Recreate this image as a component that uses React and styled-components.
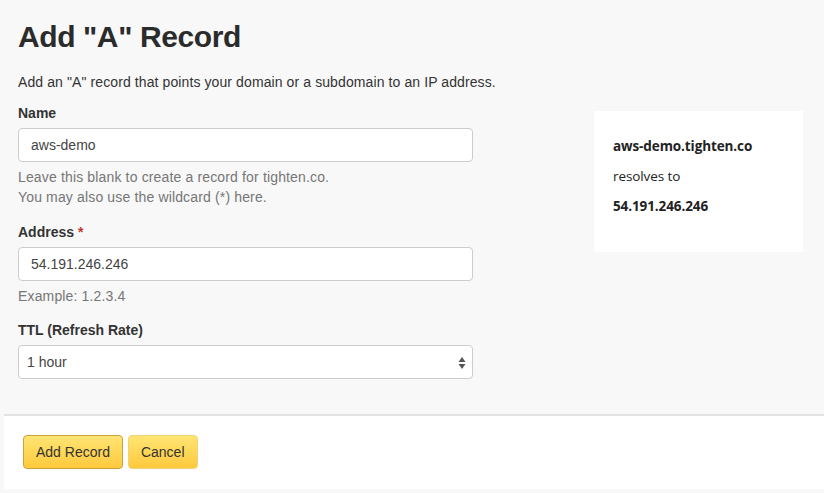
import React from "react";
import styled, { createGlobalStyle } from "styled-components";

const GlobalStyle = createGlobalStyle`
  html, body {
    margin: 0;
    padding: 0;
    background: #f8f8f8;
    font-family: "Liberation Sans", Arial, sans-serif;
    color: #333;
  }
  * { box-sizing: border-box; }
`;

const Page = styled.div`
  width: 824px;
  height: 493px;
  overflow: hidden;
  background: #f8f8f8;
`;

const Body = styled.div`
  display: flex;
  padding: 0 18px 0 18px;
  height: 414px;
`;

const FormColumn = styled.div`
  width: 455px;
`;

const Title = styled.h1`
  margin: 0;
  padding-top: 20px;
  font-size: 30px;
  line-height: 34px;
  font-weight: bold;
  color: #2b2b2b;
  letter-spacing: -0.4px;
`;

const Intro = styled.p`
  margin: 18px 0 0;
  font-size: 14px;
  line-height: 20px;
  white-space: nowrap;
  letter-spacing: 0.1px;
`;

const Group = styled.div`
  margin-top: ${(p) => p.$top || 15}px;
`;

const Label = styled.label`
  display: block;
  font-size: 14px;
  font-weight: bold;
  line-height: 20px;
  margin-bottom: 5px;
  color: #333;
`;

const Required = styled.span`
  color: #c0392b;
`;

const Input = styled.input`
  display: block;
  width: 100%;
  height: 34px;
  padding: 0 12px;
  font-family: "Liberation Sans", Arial, sans-serif;
  font-size: 14px;
  color: #444;
  background: #fff;
  border: 1px solid #ccc;
  border-radius: 4px;
  outline: none;
`;

const SelectBox = styled.div`
  position: relative;
  height: 34px;
  background: #fff;
  border: 1px solid #ccc;
  border-radius: 4px;
  display: flex;
  align-items: center;
  padding: 0 8px;
  font-size: 14px;
  color: #444;
`;

const Arrows = styled.svg`
  position: absolute;
  right: 6px;
  top: 11px;
`;

const Help = styled.div`
  margin-top: 5px;
  font-size: 14px;
  line-height: 20px;
  color: #767676;
  letter-spacing: 0.15px;
`;

const Preview = styled.aside`
  margin-left: 121px;
  margin-top: 111px;
  width: 209px;
  height: 141px;
  background: #fff;
  padding: 20px 19px;
  font-family: "Open Sans", "Noto Sans", sans-serif;
  font-size: 13.5px;
  color: #222;
`;

const PreviewLine = styled.div`
  line-height: 30px;
  font-weight: ${(p) => (p.$bold ? 700 : 400)};
  letter-spacing: -0.1px;
`;

const Footer = styled.div`
  margin-left: 4px;
  height: 75px;
  background: #fff;
  border-top: 2px solid #e2e2e2;
  display: flex;
  align-items: center;
  gap: 5px;
  padding: 0 0 0 19px;
`;

const Button = styled.button`
  height: 34px;
  padding: 0 12px;
  font-family: "Liberation Sans", Arial, sans-serif;
  font-size: 14px;
  color: #333;
  border-radius: 4px;
  border: 1px solid ${(p) => (p.$primary ? "#c9a23a" : "#f0d27a")};
  background: linear-gradient(#ffe574, #fec93c);
  margin-bottom: 2px;
`;

export default function App() {
  return (
    <Page>
      <GlobalStyle />
      <Body>
        <FormColumn>
          <Title>Add "A" Record</Title>
          <Intro>
            Add an "A" record that points your domain or a subdomain to an IP address.
          </Intro>
          <Group $top={11}>
            <Label>Name</Label>
            <Input defaultValue="aws-demo" />
            <Help>
              Leave this blank to create a record for tighten.co.
              <br />
              You may also use the wildcard (*) here.
            </Help>
          </Group>
          <Group $top={15}>
            <Label>
              Address <Required>*</Required>
            </Label>
            <Input defaultValue="54.191.246.246" />
            <Help>Example: 1.2.3.4</Help>
          </Group>
          <Group $top={14}>
            <Label>TTL (Refresh Rate)</Label>
            <SelectBox>
              1 hour
              <Arrows width="8" height="12" viewBox="0 0 8 12">
                <path d="M4 0 L7.5 5 H0.5 Z" fill="#555" />
                <path d="M4 12 L7.5 7 H0.5 Z" fill="#555" />
              </Arrows>
            </SelectBox>
          </Group>
        </FormColumn>
        <Preview>
          <PreviewLine $bold>aws-demo.tighten.co</PreviewLine>
          <PreviewLine>resolves to</PreviewLine>
          <PreviewLine $bold>54.191.246.246</PreviewLine>
        </Preview>
      </Body>
      <Footer>
        <Button $primary>Add Record</Button>
        <Button>Cancel</Button>
      </Footer>
    </Page>
  );
}
